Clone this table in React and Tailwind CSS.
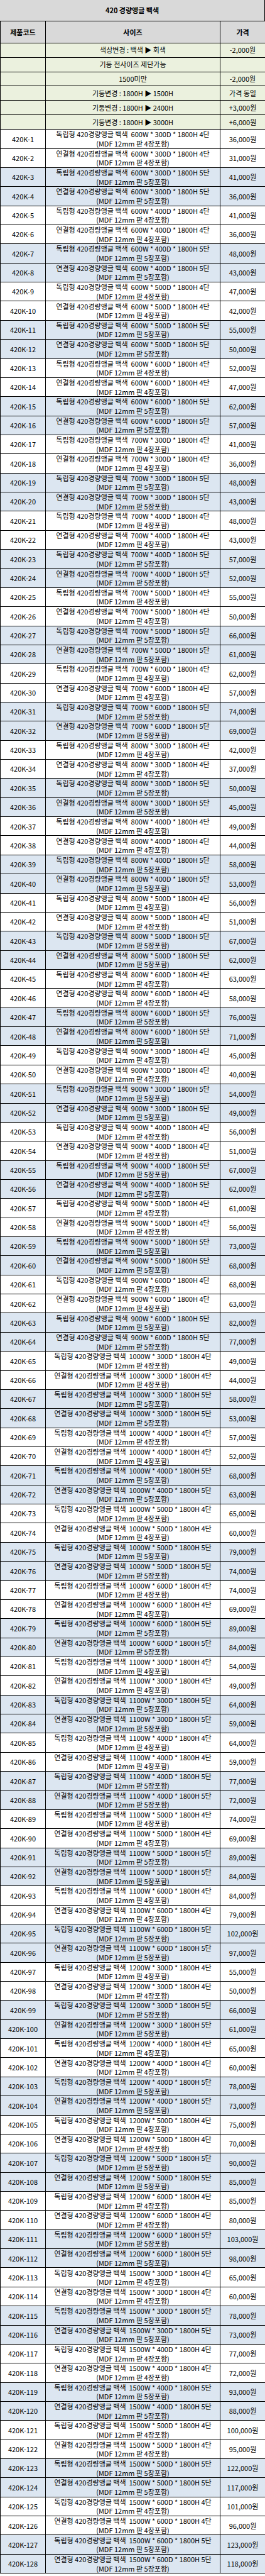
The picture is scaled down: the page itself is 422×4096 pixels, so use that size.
import React from 'react';

const FONT = { fontFamily: '"Malgun Gothic", "Noto Sans CJK KR", "Noto Sans", sans-serif' };

const options = [
  { text: '색상변경 : 백색 ▶ 회색', price: '-2,000원' },
  { text: '기둥 전사이즈 제단가능', price: '' },
  { text: '1500미만', price: '-2,000원' },
  { text: '기둥변경 : 1800H ▶ 1500H', price: '가격 동일' },
  { text: '기둥변경 : 1800H ▶ 2400H', price: '+3,000원' },
  { text: '기둥변경 : 1800H ▶ 3000H', price: '+6,000원' },
];

// width -> [4단 독립형, 5단 독립형] per depth 300/400/500/600 (연결형 = 독립형 - 5,000)
const priceTable = {
  600: [[36, 41], [41, 48], [47, 55], [52, 62]],
  700: [[41, 48], [48, 57], [55, 66], [62, 74]],
  800: [[42, 50], [49, 58], [56, 67], [63, 76]],
  900: [[45, 54], [56, 67], [61, 73], [68, 82]],
  1000: [[49, 58], [57, 68], [65, 79], [74, 89]],
  1100: [[54, 64], [64, 77], [74, 89], [84, 102]],
  1200: [[55, 66], [65, 78], [75, 90], [85, 103]],
  1500: [[65, 78], [77, 93], [100, 122], [101, 123]],
};

const widths = [600, 700, 800, 900, 1000, 1100, 1200, 1500];
const depths = [300, 400, 500, 600];

const products = [];
widths.forEach((w) => {
  depths.forEach((d, di) => {
    const [p4, p5] = priceTable[w][di];
    products.push({ type: '독립형', w, d, tier: 4, price: p4 * 1000, blue: false });
    products.push({ type: '연결형', w, d, tier: 4, price: (p4 - 5) * 1000, blue: false });
    products.push({ type: '독립형', w, d, tier: 5, price: p5 * 1000, blue: true });
    products.push({ type: '연결형', w, d, tier: 5, price: (p5 - 5) * 1000, blue: true });
  });
});

const won = (n) => n.toLocaleString('en-US') + '원';

const App = () => {
  return (
    <div className="w-[422px] bg-white text-black" style={FONT}>
      <div className="h-[34.38px] bg-[#d9d9d9] border-b border-r border-black flex items-center justify-center text-[11px] font-bold">
        420 경량앵글 백색
      </div>

      <div className="grid grid-cols-[72px_278px_72px] h-[34.38px] bg-[#d9d9d9] border-b border-l border-black text-[11px] font-bold">
        <div className="border-r border-black flex items-center justify-center">제품코드</div>
        <div className="border-r border-black flex items-center justify-center">사이즈</div>
        <div className="border-r border-black flex items-center justify-center">가격</div>
      </div>

      {options.map((o, i) => (
        <div key={i} className="grid grid-cols-[72px_278px_72px] h-[22.92px] bg-[#ebf1de] border-b border-l border-black text-[11px]">
          <div className="border-r border-black" />
          <div className="border-r border-black flex items-center justify-center">{o.text}</div>
          <div className="border-r border-black flex items-center justify-center">{o.price}</div>
        </div>
      ))}

      {products.map((p, i) => (
        <div
          key={i}
          className={
            'grid grid-cols-[72px_278px_72px] h-[30.37px] border-b border-l border-black text-[11px] ' +
            (p.blue ? 'bg-[#dce6f1]' : 'bg-white')
          }
        >
          <div className="border-r border-black flex items-center justify-center">420K-{i + 1}</div>
          <div className="border-r border-black flex flex-col items-center justify-center leading-[14.6px] whitespace-pre">
            <span>{`${p.type} 420경량앵글 백색  ${p.w}W * ${p.d}D * 1800H ${p.tier}단`}</span>
            <span>{`(MDF 12mm 판 ${p.tier}장포함)`}</span>
          </div>
          <div className="border-r border-black flex items-center justify-center">{won(p.price)}</div>
        </div>
      ))}
    </div>
  );
};

export default App;
